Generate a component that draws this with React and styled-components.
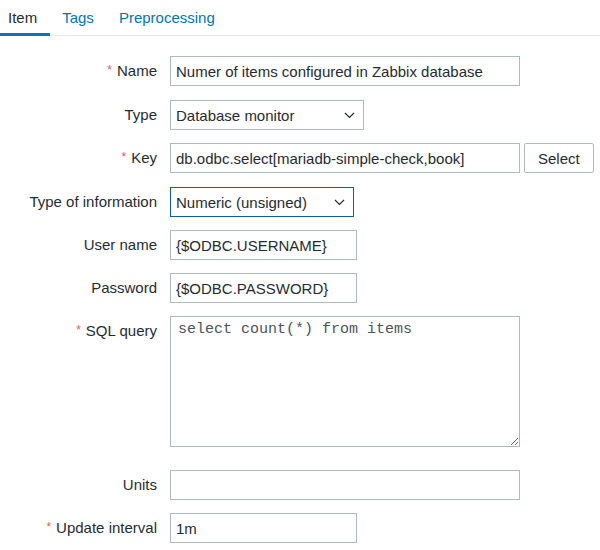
import React from 'react';
import styled, { createGlobalStyle } from 'styled-components';

const GlobalStyle = createGlobalStyle`
  body {
    margin: 0;
    background: #fff;
    font-family: "Liberation Sans", Arial, sans-serif;
    font-size: 15px;
    color: #1f2c33;
  }
`;

const TabBar = styled.div`
  display: flex;
  height: 36px;
  box-shadow: inset 0 -1px 0 #e6eaec;
`;

const Tab = styled.div`
  line-height: 35px;
  padding: 0 13px 0 12px;
  color: ${props => (props.active ? '#1f2c33' : '#0275b8')};
  box-shadow: ${props => (props.active ? 'inset 0 -3px 0 #0275b8' : 'none')};
  cursor: pointer;

  &:first-child {
    padding-left: 8px;
  }
`;

const Form = styled.div`
  display: grid;
  grid-template-columns: 157px 1fr;
  column-gap: 13px;
  row-gap: 13px;
  margin-top: 20px;
`;

const Label = styled.div`
  text-align: right;
  line-height: 30px;
  white-space: nowrap;
`;

const Asterisk = styled.span`
  color: #e45959;
  font-size: 12px;
  position: relative;
  top: -2px;
  margin-right: 5px;
`;

const Field = styled.div`
  display: flex;
  gap: 4px;
  margin-bottom: ${props => props.extra || 0}px;
`;

const TextInput = styled.input`
  box-sizing: border-box;
  width: ${props => props.w}px;
  height: 30px;
  margin: 0;
  padding: 0 5px;
  border: 1px solid #acbbc2;
  border-radius: 0;
  background: #fff;
  font-family: "Liberation Sans", Arial, sans-serif;
  font-size: 15px;
  color: #1f2c33;
  outline: none;
`;

const SelectBox = styled.div`
  box-sizing: border-box;
  width: ${props => props.w}px;
  height: 30px;
  display: flex;
  align-items: center;
  justify-content: space-between;
  padding: 0 8px 0 5px;
  border: 1px solid ${props => (props.focused ? '#0d5e9e' : '#acbbc2')};
  background: #fff;
  cursor: pointer;
`;

const Button = styled.button`
  box-sizing: border-box;
  height: 30px;
  padding: 0 13px;
  border: 1px solid #acbbc2;
  border-radius: 2px;
  background: #fff;
  font-family: "Liberation Sans", Arial, sans-serif;
  font-size: 15px;
  color: #1f2c33;
`;

const TextArea = styled.textarea`
  box-sizing: border-box;
  width: 350px;
  height: 131px;
  margin: 0;
  padding: 4px 7px;
  border: 1px solid #acbbc2;
  border-radius: 0;
  font-family: "Liberation Mono", "Courier New", monospace;
  font-size: 15px;
  line-height: 17px;
  color: #4a555b;
  outline: none;
  resize: both;
`;

const Chevron = () => (
  <svg width="11" height="7" viewBox="0 0 11 7" fill="none">
    <path d="M1 1l4.5 4.5L10 1" stroke="#1f2c33" strokeWidth="1.2" />
  </svg>
);

const Row = ({ label, required, children, extra }) => (
  <>
    <Label>
      {required && <Asterisk>*</Asterisk>}
      {label}
    </Label>
    <Field extra={extra}>{children}</Field>
  </>
);

export default function App() {
  return (
    <>
      <GlobalStyle />
      <TabBar>
        <Tab active>Item</Tab>
        <Tab>Tags</Tab>
        <Tab>Preprocessing</Tab>
      </TabBar>
      <Form>
        <Row label="Name" required>
          <TextInput w={350} readOnly value="Numer of items configured in Zabbix database" />
        </Row>
        <Row label="Type">
          <SelectBox w={194}>
            <span>Database monitor</span>
            <Chevron />
          </SelectBox>
        </Row>
        <Row label="Key" required>
          <TextInput w={350} readOnly value="db.odbc.select[mariadb-simple-check,book]" />
          <Button>Select</Button>
        </Row>
        <Row label="Type of information">
          <SelectBox w={184} focused>
            <span>Numeric (unsigned)</span>
            <Chevron />
          </SelectBox>
        </Row>
        <Row label="User name">
          <TextInput w={187} readOnly value="{$ODBC.USERNAME}" />
        </Row>
        <Row label="Password">
          <TextInput w={187} readOnly value="{$ODBC.PASSWORD}" />
        </Row>
        <Row label="SQL query" required extra={10}>
          <TextArea readOnly value="select count(*) from items" />
        </Row>
        <Row label="Units">
          <TextInput w={350} readOnly value="" />
        </Row>
        <Row label="Update interval" required>
          <TextInput w={187} readOnly value="1m" />
        </Row>
      </Form>
    </>
  );
}
